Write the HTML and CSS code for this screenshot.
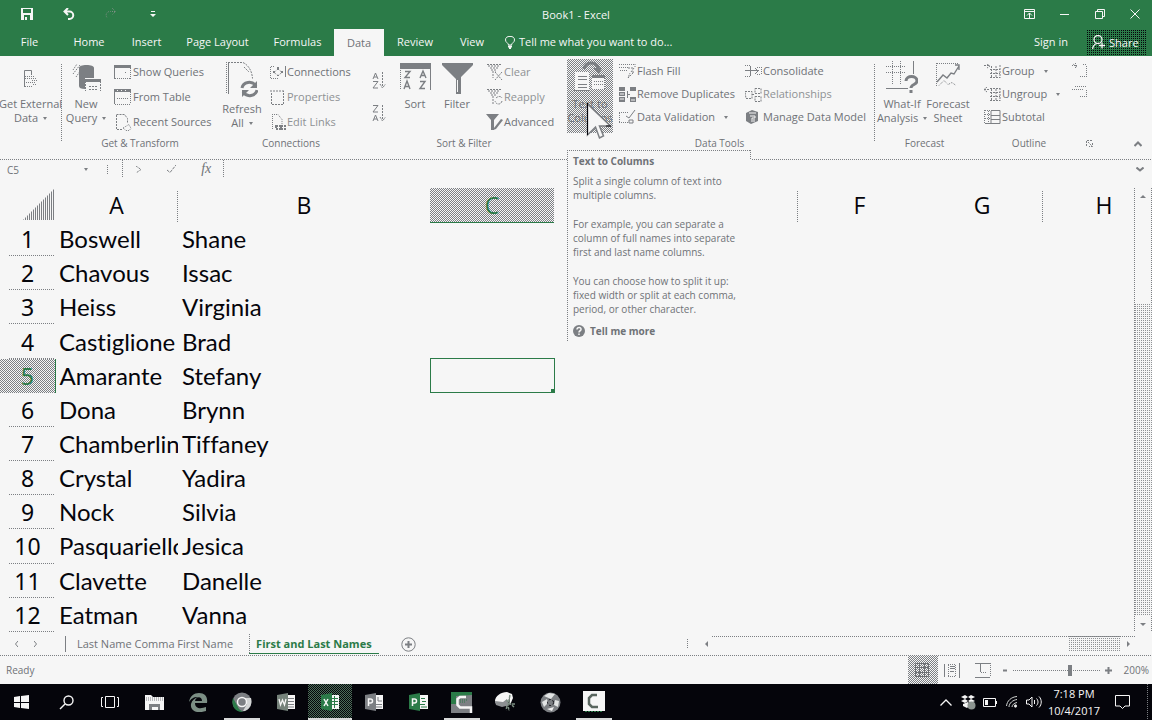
FILE: index.html
```html
<!DOCTYPE html>
<html lang="en">
<head>
<meta charset="utf-8">
<title>Book1 - Excel</title>
<link rel="stylesheet" href="styles.css">
</head>
<body>
<div class="app">
  <header class="titlebar">
    <div class="quick">
      <button aria-label="Save"><svg width="12" height="12" viewBox="0 0 12 12"><path d="M0 0h12v12H0z" fill="#f6f6f6"/><path d="M2 1h8v4H2zM3 7h6v5H3z" fill="#2b7b48"/><path d="M4 9h2v3H4z" fill="#f6f6f6"/></svg></button>
      <button aria-label="Undo"><svg width="12" height="12" viewBox="0 0 12 12" fill="none" stroke="#f6f6f6" stroke-width="2"><path d="M5 0L1.500 3.500 5 7M2 3.500h4.500a3.700 3.700 0 0 1 0 7.500H5"/></svg></button>
      <button aria-label="Redo"><svg width="12" height="12" viewBox="0 0 12 12" fill="none" stroke="#7c8f83" stroke-dasharray="1 1"><path d="M7 0l3.500 3.500L7 7M10 3.500H5.500a3.700 3.700 0 0 0-3 6.500"/></svg></button>
      <button aria-label="Customize Quick Access Toolbar"><svg width="6" height="6" viewBox="0 0 6 6" fill="#f6f6f6"><path d="M1 0h4v1H1zM0 3h6L3 6z"/></svg></button>
    </div>
    <h1 class="title">Book1 - Excel</h1>
    <div class="window">
      <button aria-label="Ribbon display options"><svg width="11" height="10" viewBox="0 0 11 10" fill="none" stroke="#f6f6f6"><path d="M.5.5h10v9H.5zM0 2.500h11M5.500 9V4M3 6.500L5.500 4 8 6.500"/></svg></button>
      <button aria-label="Minimize"><svg width="9" height="9" viewBox="0 0 9 9" stroke="#f6f6f6"><path d="M0 4.500h9"/></svg></button>
      <button aria-label="Restore"><svg width="10" height="10" viewBox="0 0 10 10" fill="none" stroke="#f6f6f6"><path d="M.5 2.500h7v7h-7zM2.500 2V.5h7v7H8"/></svg></button>
      <button aria-label="Close"><svg width="10" height="10" viewBox="0 0 10 10" stroke="#f6f6f6"><path d="M.5.5l9 9M9.500.5l-9 9"/></svg></button>
    </div>
  </header>

  <nav class="tabs">
    <button>File</button><button>Home</button><button>Insert</button><button>Page Layout</button><button>Formulas</button><button class="on">Data</button><button>Review</button><button>View</button>
    <button class="tell"><svg width="10" height="13" viewBox="0 0 10 13" fill="none" stroke="#f6f6f6"><path d="M3.500 9C3.500 7 .5 6.500.5 4a4.500 3.600 0 0 1 9 0c0 2.500-3 3-3 5z"/><path d="M3 10.500h4M4 12.500h2" stroke-width="2"/></svg>Tell me what you want to do...</button>
    <button class="sign">Sign in</button>
    <button class="share"><svg width="14" height="15" viewBox="0 0 14 15" fill="none" stroke="#f6f6f6" stroke-width="1.300"><circle cx="6" cy="4.500" r="4"/><path d="M.7 14c0-3 1.500-4.500 4-5.500M10 7.500v6M7 10.500h6"/></svg>Share</button>
  </nav>

  <section class="ribbon" aria-label="Data">
    <div class="group g-external">
      <div class="tools">
        <button class="big"><svg width="16" height="18" viewBox="0 0 16 18" fill="none" stroke="#7c7f83"><path d="M1.500 17V.5h7V5"/><path d="M2 6.500h10M2 8.500h12M2 16.500h8M3 12.500h10M9 10.500h6M10 14.500h4" stroke-dasharray="1 1"/></svg><span>Get External<br>Data <i class="caret"></i></span></button>
      </div>
      <h2>&nbsp;</h2>
    </div>
    <div class="group g-transform">
      <div class="tools">
        <button class="big"><svg width="29" height="29" viewBox="0 0 29 29"><path d="M7 4c0-2 3-3 7.500-3S22 2 22 4v10h-9v11c-4 0-6-1-6-3z" fill="#7c7f83"/><path d="M1 10l7-9M1 6l4-6M4 13l5-7" stroke="#7c7f83" stroke-dasharray="1.500 1"/><path d="M13 15h16v13H13z" fill="#f6f6f6"/><path d="M13 15h16v3H13z" fill="#7c7f83"/><path d="M13.500 17v10M28.500 17v10M17 22.500h9M17 25.500h9" stroke="#7c7f83" fill="none" stroke-dasharray="2 1"/></svg><span>New<br>Query <i class="caret"></i></span></button>
        <div class="list">
          <button><svg width="18" height="14" viewBox="0 0 18 14"><path d="M0 0h17v3H0zM0 3h1v11H0z" fill="#7c7f83"/><path d="M16.500 3v11M1 13.500h16M11 7.500h2" fill="none" stroke="#7c7f83" stroke-dasharray="1 1"/></svg>Show Queries</button>
          <button><svg width="18" height="16" viewBox="0 0 18 16"><path d="M0 0h17v3H0zM0 3h1v12H0z" fill="#7c7f83"/><path d="M3 1.500h12" stroke="#f6f6f6" stroke-dasharray="1 3"/><path d="M16.500 3v12M1 15.500h16M3 9.500h12" fill="none" stroke="#7c7f83" stroke-dasharray="1 1"/></svg>From Table</button>
          <button><svg width="18" height="17" viewBox="0 0 18 17" fill="none" stroke="#7c7f83"><path d="M2.500.5h8l3 4v5M2.500 1v14.500H8" stroke-dasharray="2 1"/><path d="M9 14l3 2.500h3l2-2-2-4z" stroke-dasharray="1 1"/></svg>Recent Sources</button>
        </div>
      </div>
      <h2>Get &amp; Transform</h2>
    </div>
    <div class="group g-connections">
      <div class="tools">
        <button class="big"><svg width="32" height="36" viewBox="0 0 32 36" fill="none" stroke="#7c7f83"><path d="M.5 0v32" stroke-dasharray="1 1"/><path d="M2.500 1v31"/><path d="M2 .5h15c6 3 9 9 9.500 16M18 5l5 5" stroke-dasharray="2 1"/><path d="M16 26c1-6 10-8 14-2M31 28c-1 6-10 8-14 2" stroke-width="3"/><path d="M31 19v7h-7zM16 35v-7h7z" fill="#7c7f83" stroke="none"/></svg><span>Refresh<br>All <i class="caret"></i></span></button>
        <div class="list">
          <button><svg width="16" height="13" viewBox="0 0 16 13" fill="none" stroke="#7c7f83"><path d="M4 .5H.5v12H9" stroke-dasharray="1 1"/><path d="M15.500 0v11"/><path d="M4 6.500L8 3l4 3.500-4 3z" stroke-dasharray="1 1"/><path d="M7 1h2v3H7zM3 5h2v2H3zM11 5h2v2h-2zM7 9h2v1H7z" fill="#7c7f83" stroke="none"/></svg>Connections</button>
          <button class="dim"><svg width="16" height="15" viewBox="0 0 16 15" fill="none" stroke="#7c7f83" stroke-dasharray="2 1"><path d="M0 1h14M1.500 3v11.500h12V1"/></svg>Properties</button>
          <button class="dim"><svg width="16" height="17" viewBox="0 0 16 17" fill="none" stroke="#7c7f83"><path d="M2.500 0v15M4 .5h4l4 5v5" stroke-dasharray="1 1"/><path d="M6 12h4v3H6zM11 12h4v3h-4z" stroke-dasharray="2 1" stroke-width="2"/></svg>Edit Links</button>
        </div>
      </div>
      <h2>Connections</h2>
    </div>
    <div class="group g-sort">
      <div class="tools">
        <div class="az">
          <button aria-label="Sort A to Z"><svg width="14" height="17" viewBox="0 0 14 17" fill="none" stroke="#7c7f83"><path d="M1 7l2.500-6L6 7M2 5h3M1 9.500h5L1 16h5"/><path d="M10.500 0v15M8 12l2.500 4 3-4" stroke-dasharray="2 1"/></svg></button>
          <button aria-label="Sort Z to A"><svg width="14" height="17" viewBox="0 0 14 17" fill="none" stroke="#7c7f83"><path d="M1 .5h5L1 7h5M1 16l2.500-6L6 16M2 14h3"/><path d="M10.500 0v15M8 12l2.500 4 3-4" stroke-dasharray="2 1"/></svg></button>
        </div>
        <button class="big"><svg width="31" height="28" viewBox="0 0 31 28" fill="none" stroke="#7c7f83"><path d="M0 0h31v6H0z" fill="#7c7f83" stroke="none"/><path d="M30.500 5v22"/><path d="M.5 5v22" stroke-dasharray="1 1"/><path d="M5 8.500h5l-5 6h5M20 15l3-7 3 7M21 12.500h4M4 26l3-8 3 8M5 23.500h4M20 18.500h5l-5 7h5" stroke-width="1.400"/></svg><span>Sort</span></button>
        <button class="big"><svg width="31" height="31" viewBox="0 0 31 31"><path d="M0 0h31v2L19 14v17h-5V16L0 2z" fill="#7c7f83"/><path d="M15.500 17v12" stroke="#f6f6f6"/></svg><span>Filter</span></button>
        <div class="list">
          <button class="dim"><svg width="17" height="17" viewBox="0 0 17 17" fill="none" stroke="#7c7f83"><path d="M1 .5h14M2 2h11M4 4h9M5 6h6M6 8h4M7 10v4M9 8l7 8M16 8l-7 8" stroke-dasharray="2 1"/></svg>Clear</button>
          <button class="dim"><svg width="17" height="17" viewBox="0 0 17 17" fill="none" stroke="#7c7f83"><path d="M1 .5h14M2 2h11M4 4h9M5 6h5M6 8h3M7 10v5M10 9c2-2 5-2 6 0M16 12c-1 4-6 4-7 0" stroke-dasharray="2 1"/></svg>Reapply</button>
          <button><svg width="17" height="17" viewBox="0 0 17 17"><path d="M0 0h13L8 6v10H5V6z" fill="#7c7f83"/><path d="M8 14l7-9 2 1-7 9-3 1z" fill="#7c7f83"/></svg>Advanced</button>
        </div>
      </div>
      <h2>Sort &amp; Filter</h2>
    </div>
    <div class="group g-data">
      <div class="tools">
        <button class="big hover"><svg width="32" height="32" viewBox="0 0 32 32" fill="none" stroke="#7c7f83"><path d="M1 11h14v18H1zM18 15h13v13H18z" fill="#f6f6f6" stroke="none"/><path d="M4 15.500h9M4 18.500h9M4 23.500h9M4 26.500h9M0 29.500h15"/><path d="M18 14h13v3H18z" fill="#7c7f83" stroke="none"/><path d="M20 20.500h10M20 23.500h10M30.500 17v11" stroke-dasharray="1 1"/><path d="M10 8c2-8 12-8 15 0" stroke-width="3"/><path d="M19 7h9l-3 6z" fill="#7c7f83" stroke="none"/></svg><span>Text to<br>Columns</span></button>
        <div class="list">
          <button><svg width="17" height="16" viewBox="0 0 17 16" fill="none" stroke="#7c7f83"><path d="M0 1.500h16M0 4.500h10M16 1v3M1 7.500h8" stroke-dasharray="1 1"/><path d="M9 5h6l-3 4h3l-6 6 2-5" stroke-dasharray="2 1"/></svg>Flash Fill</button>
          <button><svg width="17" height="15" viewBox="0 0 17 15" fill="#7c7f83"><path d="M0 0h6v4H0zM0 5h6v4H0zM0 10h6v5H0zM11 0h6v4h-6zM11 10h6v5h-6zM8 4h1v7H8zM8 7h3v1H8z"/><path d="M1 7h4M1 12h4M12 13h4" stroke="#f6f6f6"/></svg>Remove Duplicates</button>
          <button><svg width="17" height="14" viewBox="0 0 17 14" fill="none" stroke="#7c7f83"><path d="M0 2.500h9M0 12.500h9M.5 3v9" stroke-dasharray="1 1"/><path d="M7 6l3 2 6-8M10 10h4v3h-4z"/></svg>Data Validation <i class="caret"></i></button>
        </div>
        <div class="list">
          <button><svg width="17" height="14" viewBox="0 0 17 14" fill="none" stroke="#7c7f83"><path d="M0 1.500h5M0 12.500h5M12 3.500h4M16.500 3v8M12 10.500h4" stroke-dasharray="1 1"/><path d="M0 6.500h14M5.500 2v10M10 4l3 3-3 3"/></svg>Consolidate</button>
          <button class="dim"><svg width="17" height="15" viewBox="0 0 17 15" fill="none" stroke="#7c7f83" stroke-dasharray="2 1"><path d="M0 4.500h7v7H1zM7 7.500h3M10 1.500h6v5h-6zM10 9.500h6v5h-6z"/></svg>Relationships</button>
          <button><svg width="17" height="14" viewBox="0 0 17 14"><path d="M1 3l6-3 6 2v9l-7 3-5-3z" fill="#7c7f83"/><path d="M5 6h5v2H7v4M9 9v3M4 3h7" fill="none" stroke="#f6f6f6"/></svg>Manage Data Model</button>
        </div>
      </div>
      <h2>Data Tools</h2>
    </div>
    <div class="group g-forecast">
      <div class="tools">
        <button class="big"><svg width="32" height="32" viewBox="0 0 32 32" fill="none" stroke="#7c7f83"><path d="M0 5.500h19M0 11.500h19M6.500 0v23M14.500 0v23" stroke-dasharray="1 1"/><path d="M27.500 0v13M0 27.500h22"/><path d="M20 20c0-6 11-6 11 0 0 4-6 3-6 7M25 29v3" stroke-width="3"/></svg><span>What-If<br>Analysis <i class="caret"></i></span></button>
        <button class="big"><svg width="24" height="24" viewBox="0 0 24 24" fill="none" stroke="#7c7f83"><path d="M.5 0v23M1 .5h22M3 22.500l5-5 4 4 4-2 4 3" stroke-dasharray="1 1"/><path d="M1 19l6-7 4 3 4-5 3 1 5-8M19 2h4v5" stroke-width="1.400"/></svg><span>Forecast<br>Sheet</span></button>
      </div>
      <h2>Forecast</h2>
    </div>
    <div class="group g-outline">
      <div class="tools">
        <div class="list">
          <button><svg width="17" height="15" viewBox="0 0 17 15" fill="none" stroke="#7c7f83"><path d="M0 1.500h6M3 0l3 2-3 2M6 5.500h10M6 9.500h10M6 13.500h10M7.500 2v12M12 2v12M16 1v13" stroke-dasharray="2 1"/></svg>Group <i class="caret"></i></button>
          <button><svg width="17" height="15" viewBox="0 0 17 15" fill="none" stroke="#7c7f83"><path d="M0 2.500h6M3 0L0 2.500 3 5M6 1.500h10M6 5.500h10M6 9.500h10M6 13.500h10M7.500 2v12M12 2v12M16 1v13" stroke-dasharray="2 1"/></svg>Ungroup <i class="caret"></i></button>
          <button><svg width="17" height="14" viewBox="0 0 17 14" fill="none" stroke="#7c7f83"><path d="M1 .5h5M1 4.500h5M1 8.500h5M.5 0v13M4.500 1v12" stroke-dasharray="1 1"/><path d="M7 .5h9v13H1M7 5.500h9M7 9.500h9M7 1v12"/></svg>Subtotal</button>
        </div>
        <div class="detail">
          <button aria-label="Show Detail"><svg width="15" height="15" viewBox="0 0 15 15" fill="none" stroke="#7c7f83" stroke-dasharray="1 1"><path d="M3.500 0v5M0 2.500h6M1 1l4 3M11 1.500h4M14.500 3v11M8 13.500h6"/></svg></button>
          <button aria-label="Hide Detail"><svg width="15" height="15" viewBox="0 0 15 15" fill="none" stroke="#7c7f83" stroke-dasharray="1 1"><path d="M0 4.500h12M3 1.500h12M14.500 5v8M8 11.500h7"/></svg></button>
        </div>
      </div>
      <h2>Outline</h2>
    </div>
    <div class="ribbon-end">
      <button aria-label="Outline settings"><svg width="7" height="7" viewBox="0 0 7 7" fill="none" stroke="#7c7f83"><path d="M.5 6V.5H6M2 2l4 4M6.500 3v3.500H3" stroke-dasharray="2 1"/></svg></button>
      <button aria-label="Collapse ribbon"><svg width="8" height="6" viewBox="0 0 8 6" fill="none" stroke="#7c7f83" stroke-width="2"><path d="M.5 5L4 1.500 7.500 5"/></svg></button>
    </div>

    <svg class="cursor" width="28" height="38" viewBox="0 0 28 38"><path d="M1.500 2v31l8-8 4 11 4-2-4-10h11z" fill="#f6f6f6" stroke="#7c7f83" stroke-width="1.500"/><path d="M1.500 1v32M20 24h5" stroke="#05050b"/></svg>
    <aside class="tooltip" role="tooltip">
      <h3>Text to Columns</h3>
      <p>Split a single column of text into<br>multiple columns.</p>
      <p>For example, you can separate a<br>column of full names into separate<br>first and last name columns.</p>
      <p>You can choose how to split it up:<br>fixed width or split at each comma,<br>period, or other character.</p>
      <a href="#"><svg width="12" height="12" viewBox="0 0 12 12"><circle cx="6" cy="6" r="6" fill="#7c7f83"/><path d="M4 4.500c0-3 4.500-2.500 4 0C8 6 6 5.500 6 7.500M6 8.500v1.500" fill="none" stroke="#f6f6f6" stroke-width="1.500"/></svg>Tell me more</a>
    </aside>
  </section>

  <section class="formula">
    <label class="name"><input aria-label="Name Box" value="C5"><i class="caret"></i></label>
    <span class="grip"></span>
    <div class="fx">
      <button aria-label="Cancel"><svg width="7" height="7" viewBox="0 0 7 7" fill="none" stroke="#7c7f83" stroke-dasharray="2 1"><path d="M1 0l5 3.500L1 7"/></svg></button>
      <button aria-label="Enter"><svg width="9" height="8" viewBox="0 0 9 8" fill="none" stroke="#7c7f83" stroke-dasharray="3 1"><path d="M0 5l3 2.500L9 0"/></svg></button>
      <button class="fn">fx</button>
    </div>
    <input class="entry" aria-label="Formula Bar">
    <button class="expand" aria-label="Expand formula bar"><svg width="8" height="5" viewBox="0 0 8 5" fill="none" stroke="#7c7f83" stroke-width="2"><path d="M.5.5L4 3.500 7.500.5"/></svg></button>
  </section>

  <main class="sheet">
    <div class="cells">
      <table>
        <colgroup><col class="c-row"><col class="c-std"><col class="c-b"><col class="c-c"><col class="c-de"><col class="c-de"><col class="c-std"><col class="c-de"><col class="c-de"></colgroup>
        <thead><tr><th class="corner"><svg width="32" height="32" viewBox="0 0 32 32"><defs><pattern id="hatch" width="2" height="2" patternUnits="userSpaceOnUse"><path d="M0 0h1v2H0z" fill="#7c7f83"/></pattern></defs><path d="M31 0v31H0z" fill="url(#hatch)"/></svg></th><th class="edge">A</th><th>B</th><th class="sel">C</th><th aria-label="D"></th><th class="edge" aria-label="E"></th><th>F</th><th class="edge">G</th><th>H</th></tr></thead>
        <tbody>
          <tr><th>1</th><td>Boswell</td><td>Shane</td><td></td><td></td><td></td><td></td><td></td><td></td></tr>
          <tr><th>2</th><td>Chavous</td><td>Issac</td><td></td><td></td><td></td><td></td><td></td><td></td></tr>
          <tr><th>3</th><td>Heiss</td><td>Virginia</td><td></td><td></td><td></td><td></td><td></td><td></td></tr>
          <tr><th>4</th><td>Castiglione</td><td>Brad</td><td></td><td></td><td></td><td></td><td></td><td></td></tr>
          <tr><th class="sel">5</th><td>Amarante</td><td>Stefany</td><td class="active"></td><td></td><td></td><td></td><td></td><td></td></tr>
          <tr><th>6</th><td>Dona</td><td>Brynn</td><td></td><td></td><td></td><td></td><td></td><td></td></tr>
          <tr><th>7</th><td>Chamberlin</td><td>Tiffaney</td><td></td><td></td><td></td><td></td><td></td><td></td></tr>
          <tr><th>8</th><td>Crystal</td><td>Yadira</td><td></td><td></td><td></td><td></td><td></td><td></td></tr>
          <tr><th>9</th><td>Nock</td><td>Silvia</td><td></td><td></td><td></td><td></td><td></td><td></td></tr>
          <tr><th>10</th><td>Pasquariello</td><td>Jesica</td><td></td><td></td><td></td><td></td><td></td><td></td></tr>
          <tr><th>11</th><td>Clavette</td><td>Danelle</td><td></td><td></td><td></td><td></td><td></td><td></td></tr>
          <tr><th>12</th><td>Eatman</td><td>Vanna</td><td></td><td></td><td></td><td></td><td></td><td></td></tr>
        </tbody>
      </table>
    </div>
    <div class="vscroll">
      <button aria-label="Scroll up"><i class="tri up"></i></button>
      <div class="track"></div>
      <div class="thumb"></div>
      <button aria-label="Scroll down"><i class="tri down"></i></button>
    </div>
  </main>

  <section class="sheetbar">
    <div class="steps"><button aria-label="Previous sheet"><svg width="3" height="6" viewBox="0 0 3 6" fill="none" stroke="#7c7f83"><path d="M3 0L.5 3 3 6"/></svg></button><button aria-label="Next sheet"><svg width="3" height="6" viewBox="0 0 3 6" fill="none" stroke="#7c7f83"><path d="M0 0l2.500 3L0 6"/></svg></button></div>
    <button class="sheet-tab">Last Name Comma First Name</button>
    <button class="sheet-tab current">First and Last Names</button>
    <button class="add" aria-label="New sheet"><svg width="15" height="15" viewBox="0 0 15 15" fill="none" stroke="#7c7f83"><circle cx="7.500" cy="7.500" r="6.700"/><path d="M7.500 4v7M4 7.500h7" stroke-width="2"/></svg></button>
    <span class="grip"></span>
    <div class="hscroll"><button aria-label="Scroll left"><i class="tri left"></i></button><div class="track"></div><div class="thumb"></div><button aria-label="Scroll right"><i class="tri right"></i></button></div>
  </section>

  <footer class="status">
    <span class="ready">Ready</span>
    <button class="view on" aria-label="Normal"><svg width="15" height="15" viewBox="0 0 15 15" fill="none" stroke="#6d7074"><path d="M.5.5h13v13H.5zM0 4.500h14M0 9.500h14M4.500 0v14M9.500 0v14"/></svg></button>
    <button class="view" aria-label="Page Layout"><svg width="17" height="15" viewBox="0 0 17 15" fill="none" stroke="#7c7f83"><path d="M.5 1v13M15.500 0v15"/><path d="M4 1.500h8M4.500 2v12M11.500 2v12M4 13.500h8" stroke-dasharray="1 1"/><path d="M6 3.500h5M6 5.500h5M6 8.500h4"/></svg></button>
    <button class="view" aria-label="Page Break Preview"><svg width="16" height="15" viewBox="0 0 16 15" fill="none" stroke="#7c7f83"><path d="M0 .5h15M0 14.500h15M5.500 0v9"/><path d="M15.500 0v14M6 9.500h5" stroke-dasharray="1 1"/></svg></button>
    <button class="zoom-step" aria-label="Zoom out"><svg width="7" height="7" viewBox="0 0 7 7" stroke="#7c7f83" stroke-width="2"><path d="M1 3.500h4"/></svg></button>
    <input class="zoom" type="range" min="0" max="100" value="66" aria-label="Zoom">
    <button class="zoom-step" aria-label="Zoom in"><svg width="7" height="7" viewBox="0 0 7 7" stroke="#7c7f83" stroke-width="2"><path d="M0 3.500h7M3.500 0v7"/></svg></button>
    <span class="percent">200%</span>
  </footer>

  <nav class="taskbar">
    <div class="apps">
      <button aria-label="Start"><svg width="16" height="14" viewBox="0 0 16 14" fill="#f6f6f6"><path d="M0 2l6-1v6H0zM7 1l8-1v7H7zM0 8h6v5l-6-1zM7 8h8v6l-8-1z"/></svg></button>
      <button aria-label="Search"><svg width="15" height="15" viewBox="0 0 15 15" fill="none" stroke="#f6f6f6" stroke-width="1.400"><circle cx="9.500" cy="5.500" r="4.500"/><path d="M6 9l-5 5"/></svg></button>
      <button aria-label="Task View"><svg width="18" height="12" viewBox="0 0 18 12" fill="none" stroke="#f6f6f6"><path d="M4.500.5h9v11h-9zM2 1.500H.5v9H2M16 1.500h1.500v9H16"/></svg></button>
      <button aria-label="File Explorer"><svg width="19" height="15" viewBox="0 0 19 15"><path d="M0 0h6l2 2h11v13H0z" fill="#f6f6f6"/><path d="M1 3h17M1 5h17" stroke="#7c7f83" stroke-dasharray="1 1"/><path d="M4 15V9h11v6h-2v-3H7v3z" fill="#7c7f83"/></svg></button>
      <button aria-label="Edge"><svg width="19" height="19" viewBox="0 0 19 19"><path d="M0 9C1 3 5 0 10 0c6 0 9 4 8 10H6c0 6 6 6 11 4v4C8 21 1 18 2 11c1-4 4-6 7-7C4 4 2 6 0 9zm6-1h7c0-5-6-5-7 0z" fill="#7c8f85"/></svg></button>
      <button class="open" aria-label="Chrome"><svg width="20" height="20" viewBox="0 0 20 20"><circle cx="10" cy="10" r="9.500" fill="#7c7f83"/><path d="M1 6l6 11 4 3C2 20-1 13 1 6z" fill="#2b7b48"/><path d="M10 6h9c2 7-3 13-8 13l4-7z" fill="#d4d6d6"/><circle cx="10" cy="10" r="4.500" fill="#7c7f83" stroke="#f6f6f6" stroke-width="1.500"/></svg></button>
      <button aria-label="Word"><svg width="18" height="18" viewBox="0 0 18 18"><path d="M10 2h8v14h-8z" fill="#f6f6f6"/><path d="M11 5.500h6M11 8.500h6M11 11.500h6M11 14h6" stroke="#7c7f83"/><path d="M0 2l11-2v18L0 16z" fill="#75827a"/><path d="M2 6l1.500 6L5.500 7l2 5L9 6" fill="none" stroke="#f6f6f6" stroke-width="1.300"/></svg></button>
      <button class="focus" aria-label="Excel"><svg width="18" height="18" viewBox="0 0 18 18"><path d="M10 2h8v14h-8z" fill="#f6f6f6"/><path d="M11 5.500h6M11 8.500h6M11 11.500h6M13.500 3v12" stroke="#2b7b48"/><path d="M0 2l11-2v18L0 16z" fill="#2b7b48"/><path d="M3 6l4 7M7 6l-4 7" stroke="#f6f6f6" stroke-width="1.500"/></svg></button>
      <button aria-label="Publisher"><svg width="18" height="18" viewBox="0 0 18 18"><path d="M10 2h8v14h-8z" fill="#f6f6f6"/><path d="M11 11.500h6M11 14h6M13 4v4h4" fill="none" stroke="#7c7f83"/><path d="M0 2l11-2v18L0 16z" fill="#7c7f83"/><path d="M3.500 13V6h2a2 2 0 0 1 0 4h-2" fill="none" stroke="#f6f6f6" stroke-width="1.500"/></svg></button>
      <button aria-label="Project"><svg width="19" height="18" viewBox="0 0 19 18"><path d="M10 2h9v14h-9z" fill="#f6f6f6"/><path d="M12 5.500h4M13 8.500h4M11 11.500h5M12 14h6" stroke="#2b7b48"/><path d="M0 2l11-2v18L0 16z" fill="#2b7b48"/><path d="M3.500 13V6h2a2 2 0 0 1 0 4h-2" fill="none" stroke="#f6f6f6" stroke-width="1.500"/></svg></button>
      <button class="open" aria-label="Camtasia"><svg width="22" height="21" viewBox="0 0 22 21"><path d="M0 0h21v21H0z" fill="#7c7f83"/><path d="M0 0h21v3L5 4v8H0z" fill="#2b7b48"/><path d="M15 5H9L6.500 7v6L9 15.500h11V21" fill="none" stroke="#f6f6f6" stroke-width="2.500"/><path d="M9 8h8M9 10h6" stroke="#2b7b48" stroke-dasharray="1 1"/></svg></button>
      <button aria-label="Snipping Tool"><svg width="22" height="20" viewBox="0 0 22 20"><path d="M0 9C0 4 6 0 12 0l5 2 1 4-3 7-8 1-6-2z" fill="#f6f6f6"/><path d="M0 9l8 1 4-3 3 6-8 2-6-2z" fill="#8c8f92"/><path d="M11 8l8 7M15 3l-2 10 1 6M12 14l-1 4M17 12h4" stroke="#7c8f83" stroke-width="1.500" stroke-dasharray="3 1"/></svg></button>
      <button aria-label="Disc tool"><svg width="21" height="21" viewBox="0 0 21 21"><circle cx="10.500" cy="10.500" r="10" fill="#7c7f83"/><path d="M4 4l5-3 6 1-4 5zM15 8l4 1-1 6-4-2zM2 10l5-3 1 4-4 4z" fill="#e2e4e4"/><path d="M7 17l7-2-2 4z" fill="#f0f0f0"/><circle cx="10.500" cy="10.500" r="3" fill="#7c7f83" stroke="#05050b" stroke-dasharray="2 2"/></svg></button>
      <button class="open" aria-label="Camtasia Recorder"><svg width="22" height="22" viewBox="0 0 22 22"><path d="M0 0h22v20H0z" fill="#f6f6f6"/><path d="M2 20.500h18" stroke="#2b7b48" stroke-dasharray="2 1"/><path d="M14 4H9L6 7v6l3 3h6" fill="none" stroke="#59665f" stroke-width="2.500"/></svg></button>
    </div>
    <div class="tray">
      <button aria-label="Show hidden icons"><svg width="12" height="7" viewBox="0 0 12 7" fill="none" stroke="#f6f6f6" stroke-width="1.300"><path d="M.5 6.500L6 1l5.500 5.500"/></svg></button>
      <button aria-label="Dropbox"><svg width="15" height="15" viewBox="0 0 15 15" fill="#f6f6f6"><path d="M0 2l4-2 3 2-3 2zM7 2l3-2 4 2-4 2zM0 6l4-2 3 2-3 2zM7 6l3-2 4 2-4 2zM2 9l5-2 2 3-3 3-4-2z"/><circle cx="10.500" cy="10.500" r="4" fill="#8c9490"/></svg></button>
      <button aria-label="Battery"><svg width="14" height="9" viewBox="0 0 14 9" fill="none" stroke="#f6f6f6"><path d="M.5.5h12v8H.5zM13.500 3v3"/><path d="M2 2h3v5H2z" fill="#f6f6f6" stroke="none"/></svg></button>
      <button aria-label="Network"><svg width="12" height="12" viewBox="0 0 12 12" fill="none" stroke="#d0d4d2"><path d="M.5 10C1 5 5 1 11 .5M3 11c0-4 4-7 8-7.500M6 11c0-2 2-4 5-4.500"/><circle cx="9.500" cy="10" r="1.200" fill="#f6f6f6"/></svg></button>
      <button aria-label="Volume"><svg width="16" height="12" viewBox="0 0 16 12" fill="none" stroke="#f6f6f6"><path d="M.5 4v4H3l3 3V1L3 4zM8.500 4v4M10.500 2.500c2 2 2 5 0 7M13 .5c3 3 3 8 0 11"/></svg></button>
      <time class="clock">7:18 PM<br>10/4/2017</time>
      <button class="notes" aria-label="Action Center"><svg width="15" height="14" viewBox="0 0 15 14" fill="none" stroke="#f6f6f6"><path d="M.5.5h14v10.500H10L7.500 13.500 5 11H.5z"/></svg></button>
    </div>
  </nav>
</div>
</body>
</html>
```
FILE: styles.css
```css
:root {
  --green: #2b7b48;
  --gray: #7c7f83;
  --text: #6f7276;
  --paper: #f6f6f6;
  --ink: #05050b;
  --dither: repeating-conic-gradient(#7c7f83 0 25%, transparent 0 50%) 0 0 / 2px 2px;
  --sparse: conic-gradient(#8f9295 25%, transparent 0) 0 0 / 2px 2px;
  --dots-x: repeating-linear-gradient(90deg, #7c7f83 0 1px, transparent 1px 2px);
  --dots-y: repeating-linear-gradient(#7c7f83 0 1px, transparent 1px 2px);
}

* { box-sizing: border-box; }

body {
  margin: 0;
  background: var(--paper);
  color: var(--text);
  font: 11px/14px "Open Sans", "Noto Sans", sans-serif;
}

button, input {
  margin: 0;
  padding: 0;
  border: 0;
  background: none;
  color: inherit;
  font: inherit;
}

svg { display: block; flex: none; }
h1, h2, h3, p { margin: 0; font: inherit; }

.app {
  display: flex;
  flex-direction: column;
  min-height: 100vh;
  overflow: hidden;
}

/* Title bar */
.titlebar {
  display: grid;
  grid-template-columns: 1fr auto 1fr;
  align-items: center;
  height: 28px;
  background: var(--green);
  color: var(--paper);
}
.quick, .window { display: flex; }
.quick { padding-left: 6px; }
.quick button { display: grid; place-items: center; width: 42px; height: 26px; }
.title { padding-top: 2px; }
.window { justify-content: flex-end; }
.window button { display: grid; place-items: center; width: 35px; height: 26px; }

/* Tabs */
.tabs {
  display: grid;
  grid-template-columns: 59px 60px 55px 87px 73px 50px 62px 52px 1fr 52px 60px;
  height: 28px;
  padding-right: 6px;
  background: var(--green);
  color: var(--paper);
}
.tabs .on {
  margin-top: 1px;
  background: var(--paper);
  color: var(--text);
}
.tell { display: flex; align-items: center; gap: 4px; padding-left: 7px; }
.sign { justify-self: start; }
.share {
  display: flex;
  align-items: center;
  gap: 3px;
  margin: 2px 0 1px;
  padding-left: 6px;
  background: conic-gradient(#05050b 25%, transparent 0) 0 0 / 2px 2px;
}

/* Ribbon */
.ribbon {
  position: relative;
  display: grid;
  grid-template-columns: 62px 156px 146px 200px 311px 99px 110px 1fr;
  height: 104px;
  background: var(--dots-x) bottom / 100% 1px no-repeat;
}
.group { display: flex; flex-direction: column; justify-content: space-between; padding: 3px 0 10px; }
.group h2 { text-align: center; font-size: 10px; line-height: 14px; }
.tools { display: flex; height: 76px; }
.g-external, .g-data { background: var(--dots-y) right 8px / 1px 78px no-repeat; }
.big {
  display: flex;
  flex: none;
  flex-direction: column;
  align-items: center;
  justify-content: flex-end;
  gap: 4px;
  height: 66px;
  white-space: nowrap;
}
.g-external .big { width: 61px; gap: 9px; }
.g-transform .big { width: 48px; }
.g-transform .list { padding-left: 4px; }
.g-connections .big { width: 48px; height: 71px; }
.g-connections .list { padding-left: 4px; }
.g-sort .big { width: 42px; height: 52px; gap: 6px; }
.g-sort .big + .big { gap: 3px; }
.g-sort .list { padding-left: 8px; }
.az { display: flex; flex-direction: column; gap: 16px; padding: 13px 0 0 8px; width: 30px; }
.g-data .hover { width: 46px; height: 74px; margin-left: 3px; padding-bottom: 8px; background: var(--dither); }
.g-data .list { width: 126px; padding: 5px 0 0 6px; gap: 9px; }
.g-forecast .tools { padding-left: 4px; }
.g-forecast .big { width: 46px; }
.g-forecast .big + .big { gap: 10px; }
.g-outline .list { width: 88px; padding: 5px 0 0 10px; gap: 9px; }
.g-outline .tools { gap: 10px; }
.detail { display: flex; flex-direction: column; gap: 7px; padding-top: 4px; }
.list { display: flex; flex: none; flex-direction: column; gap: 11px; padding-top: 6px; }
.list button { display: flex; align-items: center; gap: 1px; height: 14px; white-space: nowrap; }
.dim { color: #8e9194; }
.caret {
  display: inline-block;
  margin-left: 2px;
  border: 2px solid transparent;
  border-top: 3px solid var(--gray);
  border-bottom: 0;
  vertical-align: 2px;
}
.list .caret { margin-left: 8px; }
.ribbon-end {
  display: flex;
  align-items: flex-end;
  justify-content: space-between;
  padding: 0 10px 13px 2px;
}

.cursor { position: absolute; left: 586px; top: 46px; z-index: 3; }

/* Tooltip */
.tooltip {
  position: absolute;
  left: 567px;
  top: 94px;
  z-index: 2;
  width: 184px;
  padding: 4px 6px;
  background:
    var(--dots-x) top / 100% 1px no-repeat,
    var(--dots-y) left / 1px 100% no-repeat,
    var(--dots-y) right top / 1px 10px no-repeat,
    var(--paper);
  font-size: 10px;
  white-space: nowrap;
}
.tooltip h3, .tooltip a { font-weight: 700; }
.tooltip h3 { margin-bottom: 6px; }
.tooltip p + p { margin-top: 15px; }
.tooltip a {
  display: flex;
  align-items: center;
  gap: 5px;
  margin-top: 8px;
  color: inherit;
  text-decoration: none;
}

/* Formula bar */
.formula { display: flex; height: 28px; align-items: stretch; font-size: 10px; }
.name { display: flex; align-items: center; width: 96px; padding-left: 7px; }
.name input { width: 75px; }
.grip { align-self: center; width: 2px; height: 10px; background: var(--dots-y) left / 1px 100% no-repeat; }
.name + .grip { margin: 0 13px 8px 11px; }
.fx {
  display: flex;
  align-items: center;
  justify-content: space-around;
  width: 102px;
  margin-bottom: 10px;
  background: var(--dots-y) left / 1px 100% no-repeat, var(--dots-y) right / 1px 100% no-repeat;
}
.fn { font: italic 14px/16px "Liberation Serif", serif; }
.entry { flex: 1; min-width: 0; }
.name, .expand { padding-bottom: 9px; }
.expand { display: grid; place-items: center; width: 24px; }

/* Grid */
.sheet { display: flex; flex: 1; }
.cells { flex: 1; min-width: 0; overflow: hidden; }
table {
  width: 1165px;
  height: 100%;
  border-collapse: collapse;
  table-layout: fixed;
  color: var(--ink);
  font: 24px/30px Lato, "Open Sans", sans-serif;
  font-variant-ligatures: none;
}
.c-row { width: 55px; }
.c-std { width: 123px; }
.c-b { width: 252px; }
.c-c { width: 124px; }
.c-de { width: 122px; }
th { padding: 0; font-weight: 400; text-align: center; }
thead th { height: 34px; font: 23px/30px "Open Sans", sans-serif; }
tbody th { background: var(--dots-x) right bottom / 46px 1px no-repeat; font: 23px/30px "Noto Sans", sans-serif; }
tbody tr { height: 34px; }
td { padding: 0 0 0 4px; overflow: hidden; white-space: nowrap; }
.corner svg { margin-left: 23px; }
.edge { background: var(--dots-y) right bottom / 1px 31px no-repeat; }
thead .sel { border-bottom: 1px solid var(--green); background: var(--dither); color: var(--green); }
tbody .sel { border-right: 1px solid var(--green); background: var(--dither); color: var(--green); }
.active {
  border: 1px solid var(--green);
  background: linear-gradient(var(--green), var(--green)) right bottom / 3px 3px no-repeat;
}

.vscroll {
  display: flex;
  flex-direction: column;
  width: 18px;
  background: var(--dots-y) left / 1px 100% no-repeat, var(--dots-y) right / 1px 100% no-repeat;
}
.vscroll button, .hscroll button { display: grid; place-items: center; }
.vscroll button { height: 16px; }
.vscroll .track { flex: 100; }
.vscroll .thumb { flex: 312; background: var(--sparse); }
.tri { border: 3px solid transparent; }
.up { border-top: 0; border-bottom-color: var(--gray); }
.down { border-bottom: 0; border-top-color: var(--gray); }
.left { border-left: 0; border-right-color: var(--gray); }
.right { border-right: 0; border-left-color: var(--gray); }

/* Sheet tabs */
.sheetbar {
  display: flex;
  align-items: center;
  height: 24px;
  background: var(--dots-x) bottom / 100% 1px no-repeat;
}
.steps { display: flex; gap: 16px; width: 66px; height: 16px; padding-left: 15px; border-right: 1px solid var(--gray); }
.sheet-tab { height: 20px; padding: 0 16px 0 11px; white-space: nowrap; }
.current {
  padding: 0 7px;
  border-bottom: 1px solid var(--green);
  background: var(--dots-y) left / 1px 100% no-repeat;
  color: var(--green);
  font-weight: 700;
}
.add { margin-left: 22px; }
.sheetbar > .grip { margin-left: auto; }
.hscroll {
  display: flex;
  width: 38%;
  height: 16px;
  margin: 0 16px 0 9px;
  background: var(--dots-x) top right / 424px 1px no-repeat;
}
.hscroll button { width: 16px; }
.hscroll .track { flex: 352; }
.hscroll .thumb { flex: 52; background: var(--sparse); }

/* Status bar */
.status { display: flex; align-items: center; height: 28px; padding-right: 3px; font-size: 10px; }
.ready { margin-right: auto; padding-left: 6px; }
.view { display: grid; place-items: center; width: 30px; height: 28px; }
.view.on { background: var(--dither); }
.zoom-step { margin: 0 4px; }
.zoom { width: 88px; height: 12px; appearance: none; background: var(--dots-x) center / 100% 1px no-repeat; }
.zoom::-webkit-slider-thumb { width: 4px; height: 11px; appearance: none; background: var(--gray); }
.percent { padding-left: 8px; }

/* Taskbar */
.taskbar {
  display: flex;
  justify-content: space-between;
  height: 36px;
  background: var(--ink);
  color: var(--paper);
}
.apps, .tray { display: flex; align-items: stretch; }
.apps button { display: grid; place-items: center; width: 44px; }
.open { background: linear-gradient(#d8dada, #d8dada) bottom / 36px 2px no-repeat; }
.focus {
  background:
    linear-gradient(#d8dada, #d8dada) bottom / 100% 2px no-repeat,
    repeating-conic-gradient(#4c6d58 0 25%, transparent 0 50%) 0 0 / 2px 2px;
}
.tray { padding-right: 11px; background: var(--dots-y) right 4px top / 1px 100% no-repeat; }
.tray button { display: grid; place-items: center; width: 22px; }
.clock { width: 58px; text-align: center; padding-top: 1px; line-height: 17px; }
.tray .notes { width: 38px; }
```
